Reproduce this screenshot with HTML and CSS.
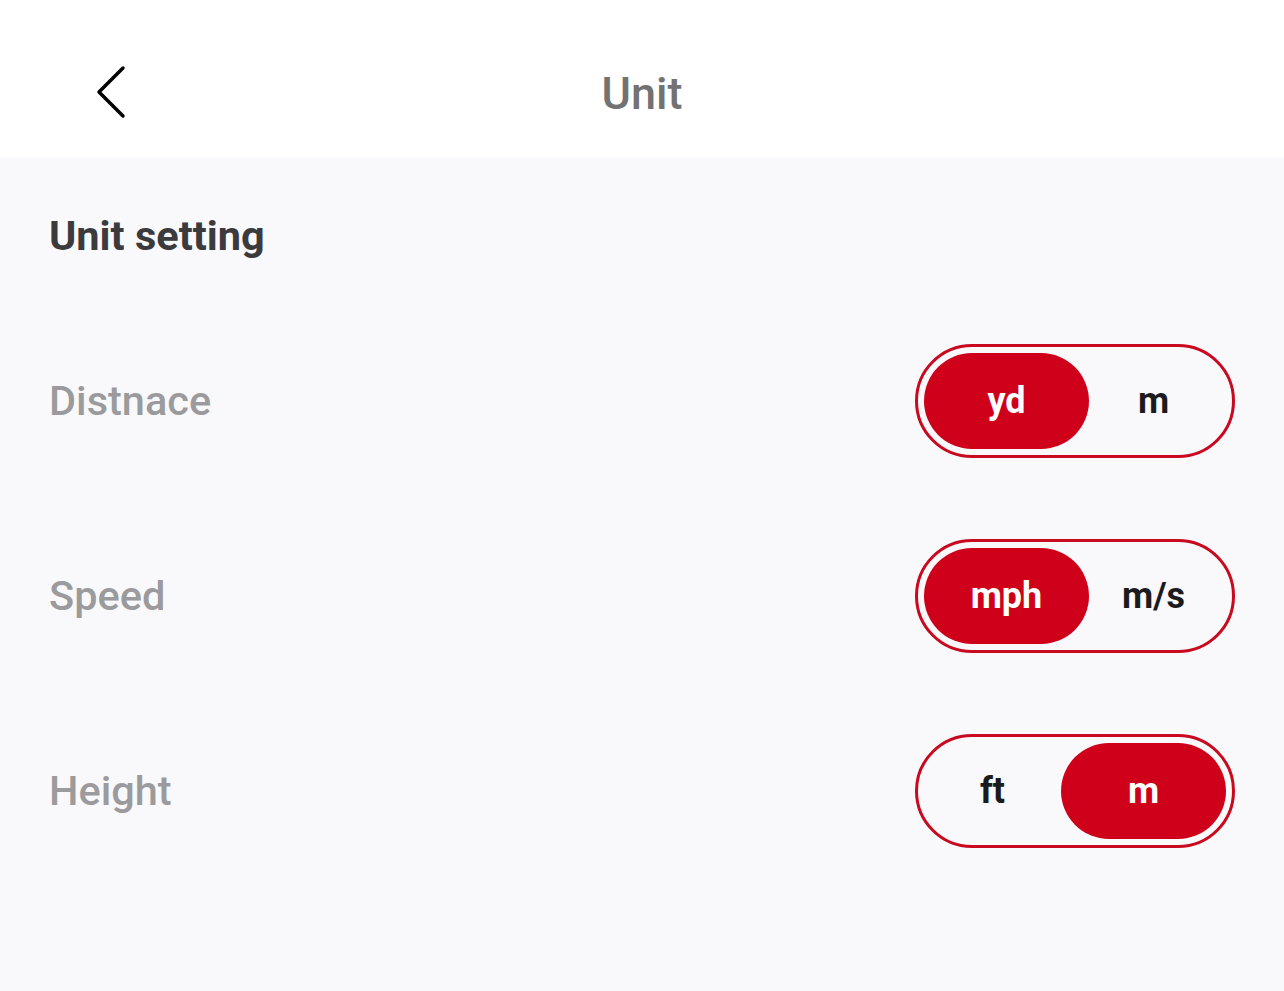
FILE: index.html
```html
<!DOCTYPE html>
<html lang="en">
<head>
<meta charset="utf-8">
<title>Unit</title>
<link rel="stylesheet" href="styles.css">
</head>
<body>
<header class="topbar">
  <button class="back" aria-label="Back">
    <svg width="40" height="60" viewBox="0 0 40 60" fill="none" stroke="#000" stroke-width="3.5" stroke-linecap="round" stroke-linejoin="round">
      <path d="M32 8 L8 32 L32 56"/>
    </svg>
  </button>
  <h1 class="title">Unit</h1>
</header>
<main class="content">
  <h2 class="section-title">Unit setting</h2>
  <div class="rows">
    <div class="row">
      <span class="label">Distnace</span>
      <div class="toggle">
        <span class="seg selected">yd</span>
        <span class="seg">m</span>
      </div>
    </div>
    <div class="row">
      <span class="label">Speed</span>
      <div class="toggle">
        <span class="seg selected">mph</span>
        <span class="seg">m/s</span>
      </div>
    </div>
    <div class="row">
      <span class="label">Height</span>
      <div class="toggle">
        <span class="seg">ft</span>
        <span class="seg selected">m</span>
      </div>
    </div>
  </div>
</main>
</body>
</html>
```
FILE: styles.css
```css
* { box-sizing: border-box; }
html, body {
  margin: 0;
  padding: 0;
  height: 100%;
}
body {
  background: #f9f9fb;
  font-family: Roboto, "Noto Sans", "Liberation Sans", sans-serif;
}
.topbar {
  height: 157px;
  background: #ffffff;
  display: flex;
  align-items: center;
  padding: 30px 0 0 91px;
}
.back {
  width: 40px;
  height: 60px;
  padding: 0;
  margin: -8px 0 0 0;
  border: none;
  background: none;
  display: flex;
}
.title {
  flex: 1;
  margin: 0;
  text-align: center;
  font-size: 45px;
  font-weight: 500;
  color: #727272;
  padding-right: 131px;
  line-height: 1;
}
.content {
  padding: 54px 49px 0 49px;
}
.section-title {
  margin: 0;
  font-size: 41.5px;
  line-height: 50px;
  font-weight: 700;
  color: #3b3b3e;
}
.rows {
  margin-top: 83px;
  display: flex;
  flex-direction: column;
  gap: 81px;
}
.row {
  display: flex;
  align-items: center;
  justify-content: space-between;
  height: 114px;
}
.label {
  font-size: 41.5px;
  font-weight: 500;
  color: #9b9b9d;
  margin-top: -2px;
}
.toggle {
  width: 320px;
  height: 114px;
  border: 3px solid #c8091f;
  border-radius: 57px;
  padding: 6px;
  display: flex;
}
.seg {
  flex: 1;
  display: flex;
  align-items: center;
  justify-content: center;
  font-size: 36px;
  font-weight: 700;
  color: #1b1b1d;
  border-radius: 48px;
}
.seg.selected {
  flex: 0 0 165px;
  background: #cf0019;
  color: #ffffff;
}
.seg.selected + .seg {
  padding-right: 8px;
}
```
